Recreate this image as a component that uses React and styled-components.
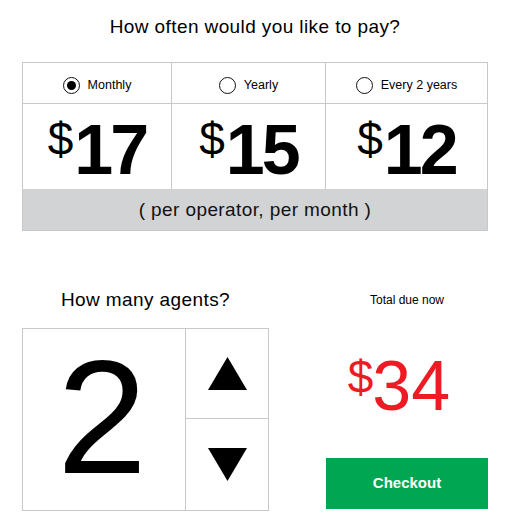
import React, { useState } from 'react'
import styled, { createGlobalStyle } from 'styled-components'

const GlobalStyle = createGlobalStyle`
  html, body {
    margin:0;
    padding:0;
    background:#fff;
  }
  body {
    font-family: "Liberation Sans", Arial, Helvetica, sans-serif;
    color:#000;
  }
  * { box-sizing:border-box; }
`

const LINE = '#c8c8c8'

const Page = styled.div`
  width:518px;
  padding:15px 30px 0 22px;
`
const Heading = styled.h2`
  margin:0;
  font-size:19px;
  font-weight:400;
  letter-spacing:0.4px;
  line-height:24px;
  text-align:center;
`
const PlanTable = styled.div`
  margin-top:23px;
  width:466px;
  border:1px solid ${LINE};
  display:grid;
  grid-template-columns:148px 154px 1fr;
`
const OptionCell = styled.label`
  height:41px;
  padding-top:4px;
  display:flex;
  align-items:center;
  justify-content:center;
  gap:8px;
  font-size:12.5px;
  border-bottom:1px solid ${LINE};
  border-left:${p => (p.$first ? 'none' : `1px solid ${LINE}`)};
  cursor:pointer;
`
const Radio = styled.span`
  width:17px;
  height:17px;
  border-radius:50%;
  border:1px solid #111;
  display:flex;
  align-items:center;
  justify-content:center;

  &::after {
    content:'';
    width:9px;
    height:9px;
    border-radius:50%;
    background:#000;
    display:${p => (p.$checked ? 'block' : 'none')};
  }
`
const PriceCell = styled.div`
  height:85px;
  padding-top:6px;
  display:flex;
  align-items:center;
  justify-content:center;
  border-left:${p => (p.$first ? 'none' : `1px solid ${LINE}`)};
`
const Note = styled.div`
  grid-column:1 / -1;
  height:41px;
  display:flex;
  align-items:center;
  justify-content:center;
  background:#d1d3d4;
  font-size:19px;
  letter-spacing:0.4px;
  color:#111;
`
const Price = styled.div`
  display:flex;
  align-items:flex-start;
  line-height:1;
  color:${p => (p.$total ? '#ed1c24' : '#000')};
  padding-right:${p => (p.$total ? '16px' : '0')};
`
const Dollar = styled.span`
  font-size:46px;
  margin-right:${p => (p.$total ? '-1px' : '1px')};
  margin-top:${p => (p.$total ? '3px' : '1px')};
`
const Amount = styled.span`
  font-size:70px;
  font-weight:${p => (p.$total ? 400 : 700)};
  letter-spacing:${p => (p.$total ? '0' : '-3px')};
`
const Lower = styled.div`
  margin-top:57px;
  display:flex;
  gap:57px;
`
const AgentsCol = styled.div`
  width:247px;
  display:flex;
  flex-direction:column;
`
const Counter = styled.div`
  margin-top:16px;
  width:247px;
  height:183px;
  border:1px solid ${LINE};
  display:grid;
  grid-template-columns:1fr 83px;
  grid-template-rows:89px 1fr;
`
const Count = styled.div`
  grid-row:1 / 3;
  display:flex;
  align-items:center;
  justify-content:center;
  padding:0 4px 6px 0;
  font-size:162px;
  line-height:1;
`
const Step = styled.button`
  margin:0;
  padding:0;
  border:none;
  border-left:1px solid ${LINE};
  border-top:${p => (p.$down ? `1px solid ${LINE}` : 'none')};
  background:#fff;
  display:flex;
  align-items:center;
  justify-content:center;
  cursor:pointer;
`
const TotalCol = styled.div`
  width:162px;
  display:flex;
  flex-direction:column;
  align-items:center;
`
const TotalLabel = styled.div`
  font-size:12px;
  line-height:24px;
`
const TotalWrap = styled.div`
  margin-top:39px;
`
const Checkout = styled.button`
  margin-top:37px;
  width:162px;
  height:51px;
  padding-bottom:3px;
  border:none;
  background:#00a651;
  color:#fff;
  font-family:inherit;
  font-size:15px;
  font-weight:700;
  cursor:pointer;
`

const plans = [
  { id:'monthly', label:'Monthly', price:17 },
  { id:'yearly', label:'Yearly', price:15 },
  { id:'biennial', label:'Every 2 years', price:12 },
]

const Triangle = ({down}) => (
  <svg width="39" height="33" viewBox="0 0 39 33">
    <polygon points={down ? '0,0 39,0 19.5,33' : '19.5,0 39,33 0,33'} fill="#000"/>
  </svg>
)

const App = () => {
  const [plan,setPlan] = useState('monthly')
  const [agents,setAgents] = useState(2)
  const current = plans.find(p => p.id === plan)

  return (
    <Page>
      <GlobalStyle/>
      <Heading>How often would you like to pay?</Heading>
      <PlanTable>
        {plans.map((p,i) => (
          <OptionCell key={p.id} $first={i===0} onClick={()=>setPlan(p.id)}>
            <Radio $checked={plan===p.id}/>
            {p.label}
          </OptionCell>
        ))}
        {plans.map((p,i) => (
          <PriceCell key={p.id} $first={i===0}>
            <Price>
              <Dollar>$</Dollar>
              <Amount>{p.price}</Amount>
            </Price>
          </PriceCell>
        ))}
        <Note>( per operator, per month )</Note>
      </PlanTable>

      <Lower>
        <AgentsCol>
          <Heading>How many agents?</Heading>
          <Counter>
            <Count>{agents}</Count>
            <Step onClick={()=>setAgents(agents+1)}><Triangle/></Step>
            <Step $down onClick={()=>setAgents(Math.max(1,agents-1))}><Triangle down/></Step>
          </Counter>
        </AgentsCol>
        <TotalCol>
          <TotalLabel>Total due now</TotalLabel>
          <TotalWrap>
            <Price $total>
              <Dollar $total>$</Dollar>
              <Amount $total>{current.price*agents}</Amount>
            </Price>
          </TotalWrap>
          <Checkout>Checkout</Checkout>
        </TotalCol>
      </Lower>
    </Page>
  )
}

export default App
